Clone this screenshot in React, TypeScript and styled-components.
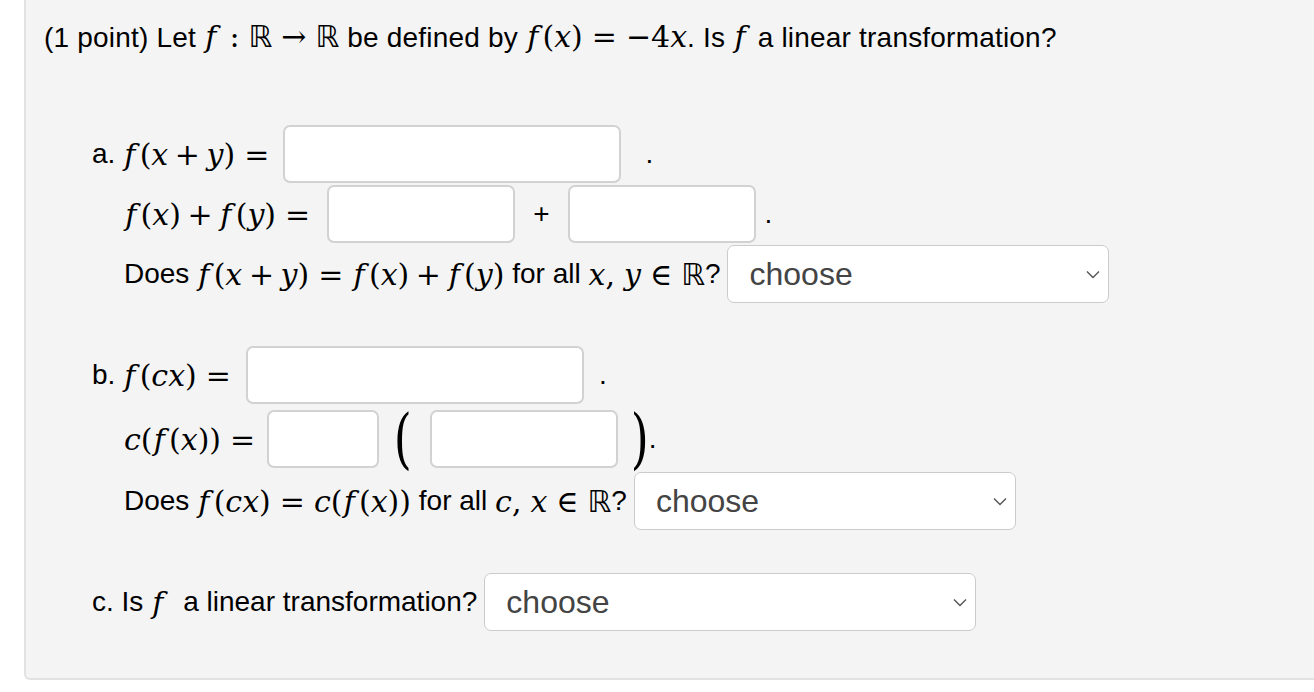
import React from 'react';
import styled, { createGlobalStyle } from 'styled-components';

const GlobalStyle = createGlobalStyle`
  html, body {
    margin: 0;
    padding: 0;
    background: #ffffff;
    font-family: "Liberation Sans", Arial, sans-serif;
    color: #000;
  }
`;

const Page = styled.div`
  padding-left: 24px;
  width: 1290px;
  overflow: hidden;
`;

const Panel = styled.div`
  background: #f4f4f4;
  border-left: 2px solid #e2e2e2;
  border-bottom: 2px solid #e2e2e2;
  border-bottom-left-radius: 6px;
  padding: 19px 0 47px 18px;
`;

const Title = styled.div`
  font-size: 28px;
  line-height: 36px;
  letter-spacing: 0.2px;
  white-space: nowrap;
`;

const Part = styled.div<{ $top: number }>`
  margin-top: ${p => p.$top}px;
  margin-left: 48px;
  display: flex;
  flex-direction: column;
`;

const Row = styled.div<{ $indent?: boolean; $gap?: number }>`
  display: flex;
  align-items: center;
  height: 58px;
  margin-top: ${p => p.$gap ?? 0}px;
  padding-left: ${p => (p.$indent ? 32 : 0)}px;
  font-size: 28px;
  white-space: nowrap;
`;

const Math = styled.span`
  font-family: "DejaVu Serif", "Liberation Serif", serif;
  font-size: 30px;
  letter-spacing: 0;
  white-space: nowrap;
`;

const V = styled.i`
  font-style: italic;
`;

const Fn = styled.i`
  font-style: italic;
  margin: 0 0.14em 0 0.04em;
`;

const Op = styled.span<{ $rel?: boolean }>`
  margin: 0 ${p => (p.$rel ? '0.3em' : '0.22em')};
`;

const Comma = styled.span`
  margin-right: 0.3em;
`;

const DS = styled.span`
  font-family: "DejaVu Sans", sans-serif;
`;

const Box = styled.input<{ $w: number; $ml?: number }>`
  box-sizing: border-box;
  width: ${p => p.$w}px;
  height: 58px;
  margin: 0 0 0 ${p => p.$ml ?? 8}px;
  border: 2px solid #d2d2d2;
  border-radius: 7px;
  background: #fff;
  outline: none;
  font-size: 24px;
  padding: 0 10px;
`;

const Plus = styled.span`
  font-size: 28px;
  margin: 0 18px 0 18px;
`;

const Dot = styled.span<{ $gap: number }>`
  margin-left: ${p => p.$gap}px;
  font-size: 28px;
`;

const Paren = styled.span<{ $side: 'l' | 'r' }>`
  font-family: "DejaVu Serif", "Liberation Serif", serif;
  font-weight: 200;
  font-size: 66px;
  line-height: 58px;
  transform: scaleX(0.7);
  margin: ${p => (p.$side === 'l' ? '0 14px 0 11px' : '0 -4px 0 9px')};
`;

const SelectBox = styled.div<{ $w: number }>`
  box-sizing: border-box;
  width: ${p => p.$w}px;
  height: 58px;
  margin-left: 7px;
  border: 1.5px solid #cbcbcb;
  border-radius: 7px;
  background: #fff;
  display: flex;
  align-items: center;
  justify-content: space-between;
  padding: 0 8px 0 21px;
  color: #444;
  font-size: 32px;
`;

const Chevron = () => (
  <svg width="14" height="9" viewBox="0 0 14 9">
    <polyline points="1,1.5 7,7.5 13,1.5" fill="none" stroke="#555" strokeWidth="1.4" />
  </svg>
);

const Choose: React.FC<{ w: number }> = ({ w }) => (
  <SelectBox $w={w}>
    <span>choose</span>
    <Chevron />
  </SelectBox>
);

const F = () => <Fn>f</Fn>;

export default function App() {
  return (
    <>
      <GlobalStyle />
      <Page>
        <Panel>
          <Title>
            (1 point) Let <Math><F /><Op $rel>:</Op><DS>ℝ</DS><Op $rel>→</Op><DS>ℝ</DS></Math> be defined by{' '}
            <Math><F />(<V>x</V>)<Op $rel>=</Op>−4<V>x</V></Math>. Is <Math><F /></Math>&nbsp;a linear transformation?
          </Title>

          <Part $top={69}>
            <Row>
              a.&nbsp;<Math><F />(<V>x</V><Op>+</Op><V>y</V>)<Op $rel>=</Op></Math>
              <Box $w={338} $ml={5} />
              <Dot $gap={24}>.</Dot>
            </Row>
            <Row $indent $gap={2}>
              <Math><F />(<V>x</V>)<Op>+</Op><F />(<V>y</V>)<Op $rel>=</Op></Math>
              <Box $w={188} />
              <Plus>+</Plus>
              <Box $w={188} $ml={0} />
              <Dot $gap={9}>.</Dot>
            </Row>
            <Row $indent $gap={2}>
              Does&nbsp;<Math><F />(<V>x</V><Op>+</Op><V>y</V>)<Op $rel>=</Op><F />(<V>x</V>)<Op>+</Op><F />(<V>y</V>)</Math>
              &nbsp;for all&nbsp;<Math><V>x</V><Comma>,</Comma><V>y</V><Op $rel>∈</Op><DS>ℝ</DS></Math>?
              <Choose w={382} />
            </Row>
          </Part>

          <Part $top={43}>
            <Row>
              b.&nbsp;<Math><F />(<V>cx</V>)<Op $rel>=</Op></Math>
              <Box $w={338} $ml={6} />
              <Dot $gap={15}>.</Dot>
            </Row>
            <Row $indent $gap={6}>
              <Math><V>c</V>(<F />(<V>x</V>))<Op $rel>=</Op></Math>
              <Box $w={112} $ml={3} />
              <Paren $side="l">(</Paren>
              <Box $w={188} $ml={0} />
              <Paren $side="r">)</Paren>
              <Dot $gap={0}>.</Dot>
            </Row>
            <Row $indent $gap={4}>
              Does&nbsp;<Math><F />(<V>cx</V>)<Op $rel>=</Op><V>c</V>(<F />(<V>x</V>))</Math>
              &nbsp;for all&nbsp;<Math><V>c</V><Comma>,</Comma><V>x</V><Op $rel>∈</Op><DS>ℝ</DS></Math>?
              <Choose w={382} />
            </Row>
          </Part>

          <Part $top={43}>
            <Row>
              c. Is&nbsp;<Math><F /></Math>&nbsp;&nbsp;a linear transformation?
              <Choose w={492} />
            </Row>
          </Part>
        </Panel>
      </Page>
    </>
  );
}
